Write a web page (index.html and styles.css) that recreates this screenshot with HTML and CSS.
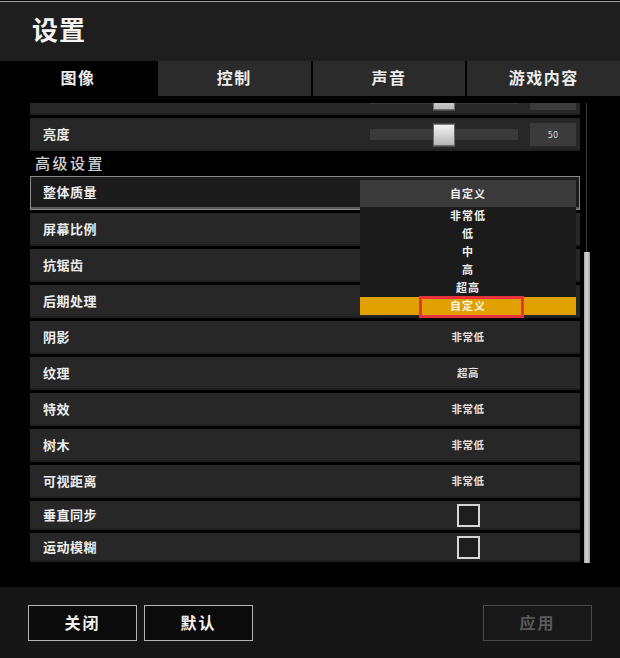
FILE: index.html
```html
<!DOCTYPE html>
<html lang="zh-CN">
<head>
<meta charset="utf-8">
<title>设置</title>
<link rel="stylesheet" href="styles.css">
</head>
<body>
<div class="app">
  <div class="topline"></div>
  <header class="titlebar"><h1 class="title">设置</h1></header>
  <nav class="tabs">
    <div class="tab active">图像</div>
    <div class="tab">控制</div>
    <div class="tab">声音</div>
    <div class="tab">游戏内容</div>
  </nav>
  <main class="content">
    <div class="viewport">
      <div class="list">
        <div class="row slider-row">
          <span class="label"></span>
          <div class="slider">
            <div class="track"><div class="thumb" style="left: 50%"></div></div>
            <div class="num"></div>
          </div>
        </div>
        <div class="row slider-row">
          <span class="label">亮度</span>
          <div class="slider">
            <div class="track"><div class="thumb" style="left: 50%"></div></div>
            <div class="num">50</div>
          </div>
        </div>
        <div class="section-title">高级设置</div>
        <div class="row quality-row">
          <span class="label">整体质量</span>
          <div class="dropdown">
            <div class="dd-head">自定义</div>
            <ul class="dd-list">
              <li class="dd-item">非常低</li>
              <li class="dd-item">低</li>
              <li class="dd-item">中</li>
              <li class="dd-item">高</li>
              <li class="dd-item">超高</li>
              <li class="dd-item selected">自定义<span class="mark"></span></li>
            </ul>
          </div>
        </div>
        <div class="row"><span class="label">屏幕比例</span><span class="value"></span></div>
        <div class="row"><span class="label">抗锯齿</span><span class="value"></span></div>
        <div class="row"><span class="label">后期处理</span><span class="value"></span></div>
        <div class="row"><span class="label">阴影</span><span class="value">非常低</span></div>
        <div class="row"><span class="label">纹理</span><span class="value">超高</span></div>
        <div class="row"><span class="label">特效</span><span class="value">非常低</span></div>
        <div class="row"><span class="label">树木</span><span class="value">非常低</span></div>
        <div class="row"><span class="label">可视距离</span><span class="value">非常低</span></div>
        <div class="row check-row"><span class="label">垂直同步</span><span class="value"><span class="checkbox"></span></span></div>
        <div class="row check-row"><span class="label">运动模糊</span><span class="value"><span class="checkbox"></span></span></div>
      </div>
    </div>
    <div class="scrollbar">
      <div class="sb-track"></div>
      <div class="sb-thumb"></div>
    </div>
  </main>
  <footer class="footer">
    <button class="btn">关闭</button>
    <button class="btn">默认</button>
    <button class="btn disabled">应用</button>
  </footer>
</div>
</body>
</html>
```

FILE: styles.css
```css
* { box-sizing: border-box; }
html, body { margin: 0; padding: 0; background: #000; }
body {
  font-family: "Noto Sans CJK SC", "Noto Sans", sans-serif;
  color: #eee;
}
.app { width: 620px; height: 658px; overflow: hidden; background: #000; }

.topline {
  height: 3px;
  background: linear-gradient(#0a0a0a 0 1px, #9c9c9c 1px 2px, #222 2px 3px);
}

.titlebar {
  height: 58px;
  background: #1e1e1e;
  display: flex;
  align-items: center;
  padding-left: 32px;
}
.title {
  margin: 0;
  font-size: 26px;
  font-weight: 700;
  line-height: 1;
  color: #f2f2f2;
  letter-spacing: 1px;
  position: relative;
  top: -3px;
}

.tabs {
  height: 35px;
  display: grid;
  grid-template-columns: 156px 1fr 1fr 1fr;
  column-gap: 2px;
  background: #000;
}
.tab {
  background: #2b2b2b;
  display: flex;
  align-items: center;
  justify-content: center;
  padding-bottom: 4px;
  font-size: 16px;
  font-weight: 700;
  letter-spacing: 1.5px;
  color: #ececec;
}
.tab.active { background: #000; }

.content {
  height: 491px;
  background: #000;
  padding-top: 7px;
  display: flex;
  align-items: flex-start;
}
.viewport {
  margin-left: 30px;
  width: 550px;
  height: 462px;
  overflow: hidden;
}
.list {
  margin-top: -21px;
  display: flex;
  flex-direction: column;
  gap: 3px;
}

.row {
  height: 33px;
  background: #272727;
  box-shadow: inset 0 -2px 0 #202020;
  display: grid;
  grid-template-columns: 1fr 216px;
  align-items: center;
  padding-right: 4px;
  padding-bottom: 2px;
}
.label {
  padding-left: 13px;
  font-size: 13px;
  font-weight: 700;
  color: #ececec;
  letter-spacing: 0.5px;
}
.value {
  text-align: center;
  font-size: 10.5px;
  font-weight: 700;
  color: #e2e2e2;
  letter-spacing: 0.5px;
  display: flex;
  justify-content: center;
  align-items: center;
}

.slider-row { grid-template-columns: 1fr auto; padding-bottom: 0; }
.slider-row .label { position: relative; top: -1px; }
.slider { display: flex; align-items: center; }
.track {
  position: relative;
  width: 148px;
  height: 11px;
  background: #3a3a3a;
}
.thumb {
  position: absolute;
  top: 50%;
  width: 22px;
  height: 23px;
  transform: translate(-50%, -50%);
  background: linear-gradient(#f4f4f4, #b4b4b4);
  border: 1px solid #6a6a6a;
}
.num {
  margin-left: 12px;
  width: 46px;
  height: 23px;
  background: #3b3b3b;
  display: flex;
  align-items: center;
  justify-content: center;
  font-family: "DejaVu Sans Condensed", "DejaVu Sans", sans-serif;
  font-size: 9px;
  color: #d8d8d8;
}

.section-title {
  height: 22px;
  margin-top: -3px;
  padding-left: 5px;
  font-size: 15px;
  line-height: 24px;
  color: #d2d2d2;
  letter-spacing: 2.5px;
  font-weight: 500;
}

.quality-row {
  height: 34px;
  background: #1b1b1b;
  border: 1px solid #8a8a8a;
  box-shadow: inset 0 -2px 0 #5a5a5a;
  padding-right: 3px;
  padding-bottom: 0;
}
.quality-row .label { padding-left: 12px; position: relative; top: -2px; }
.dropdown { position: relative; height: 27px; }
.dd-head {
  height: 27px;
  background: #3a3a3a;
  display: flex;
  align-items: center;
  justify-content: center;
  font-size: 11px;
  font-weight: 700;
  color: #f0f0f0;
  letter-spacing: 1px;
}
.dd-list {
  position: absolute;
  top: 100%;
  left: 0;
  width: 100%;
  margin: 0;
  padding: 0;
  list-style: none;
  background: #1b1b1b;
  z-index: 5;
}
.dd-item {
  position: relative;
  height: 18px;
  display: flex;
  align-items: center;
  justify-content: center;
  padding-bottom: 1px;
  font-size: 11px;
  font-weight: 700;
  color: #f0f0f0;
  letter-spacing: 1px;
}
.dd-item.selected { background: #e0a100; color: #fbf3e0; }
.mark {
  position: absolute;
  left: 59px;
  top: -1px;
  width: 105px;
  height: 22px;
  border: 3px solid #e8333b;
}

.check-row { height: 29px; padding-bottom: 0; }
.check-row .label { position: relative; top: -1px; }
.checkbox {
  display: block;
  width: 23px;
  height: 23px;
  border: 2px solid #d6d6d6;
  background: #1e1e1e;
}

.scrollbar {
  margin-left: 4px;
  width: 6px;
  height: 460px;
  display: flex;
  flex-direction: column;
}
.sb-track {
  flex: 1;
  width: 1px;
  margin-left: 2px;
  background: #3a3a3a;
}
.sb-thumb {
  height: 311px;
  background: linear-gradient(90deg, #a8a8a8, #d4d4d4 50%, #9a9a9a);
}

.footer {
  height: 71px;
  background: #161616;
  display: flex;
  gap: 7px;
  padding: 18px 28px 0;
  align-items: flex-start;
}
.btn {
  width: 109px;
  height: 36px;
  background: #0b0b0b;
  border: 1px solid #b4b4b4;
  color: #f0f0f0;
  font-family: "Noto Sans CJK SC", sans-serif;
  font-size: 16px;
  font-weight: 700;
  letter-spacing: 2px;
  padding: 0 0 3px;
}
.btn.disabled {
  margin-left: auto;
  background: #181818;
  border-color: #4a4a4a;
  color: #5a5a5a;
}
```
